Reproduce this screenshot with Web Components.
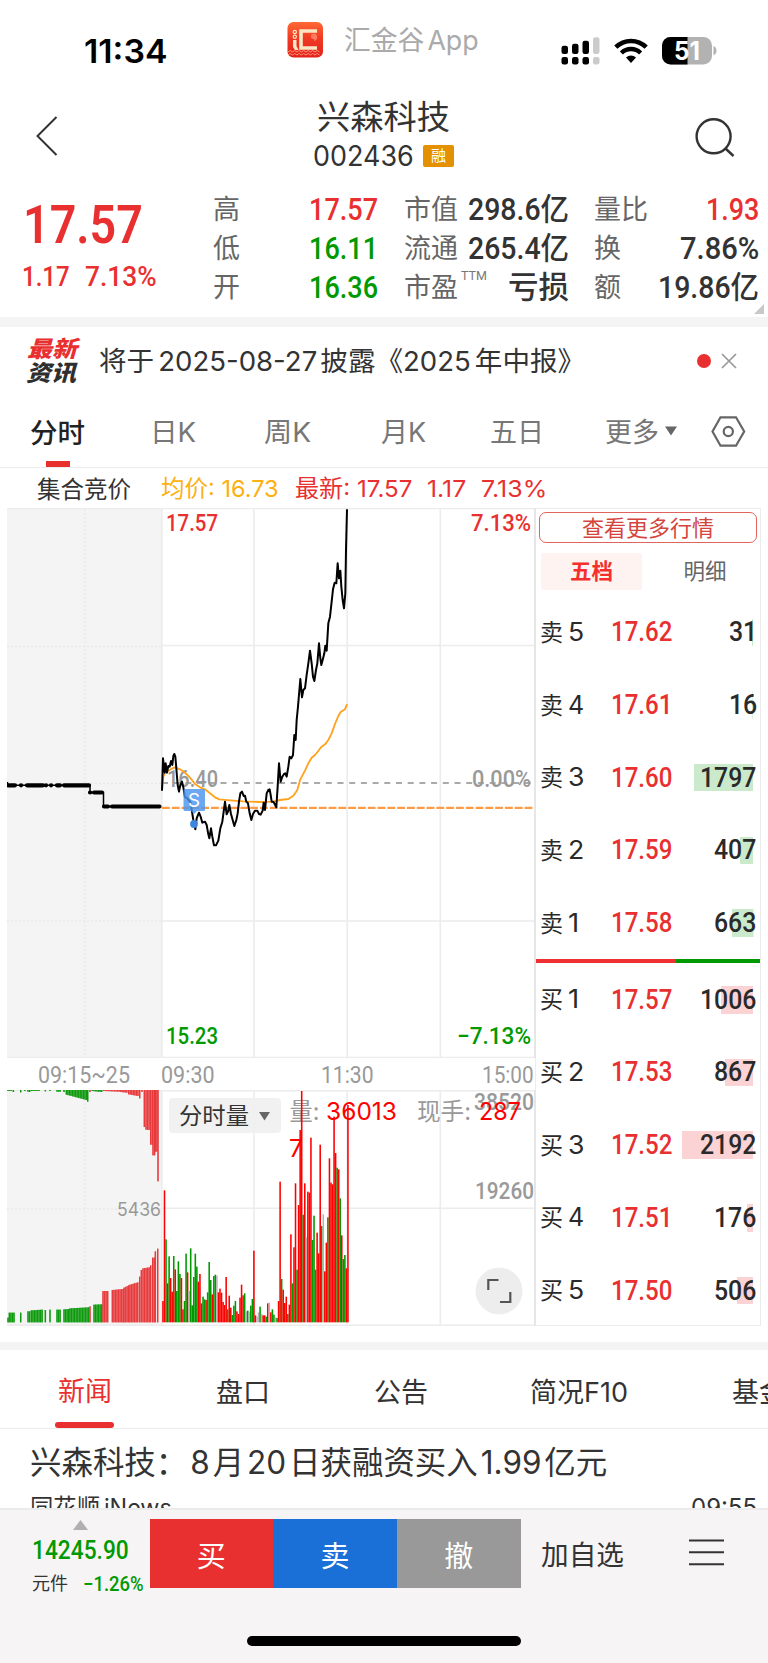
<!DOCTYPE html>
<html lang="zh-CN">
<head>
<meta charset="utf-8">
<title>兴森科技 002436</title>
<style>
  body {
    margin: 0;
    width: 768px;
    height: 1663px;
    overflow: hidden;
    background: #fff;
    color: #333;
    font-family: Inter, "Noto Sans CJK SC", sans-serif;
  }
</style>
</head>
<body>
<stock-app></stock-app>

<script>
// fit-text.js - one line of text squeezed or stretched to the width in "w"
class FitText extends HTMLElement {
  constructor() {
    super();
    this.shadowDOM = this.attachShadow({ mode: 'open' });
    this.shadowDOM.innerHTML = `
      <style>
        :host { display: inline-block; line-height: 1; white-space: nowrap; flex: none; }
        span { display: inline-block; transform-origin: 0 50%; }
      </style>
      <span><slot></slot></span>
    `;
  }

  connectedCallback() {
    const w = Number(this.getAttribute('w'));
    const span = this.shadowDOM.querySelector('span');
    const natural = span.offsetWidth;
    this.style.width = `${w}px`;
    if (natural) span.style.transform = `scaleX(${w / natural})`;
  }
}
customElements.define('fit-text', FitText);

// status-bar.js
class StatusBar extends HTMLElement {
  constructor() {
    super();
    this.shadowDOM = this.attachShadow({ mode: 'open' });
    this.shadowDOM.innerHTML = `
      <style>
        :host { display: flex; height: 86px; box-sizing: border-box; padding-left: 84px; align-items: flex-start; }
        .time { margin-top: 35px; font-size: 33px; font-weight: 600; color: #000; }
        .logo { margin: 22px 0 0 120px; }
        .app { margin: 27px 0 0 21px; font-size: 27px; color: #aaa; }
        .signal { margin: 36px 0 0 82px; }
        .wifi { margin: 38px 0 0 14px; }
        .battery { margin: 37px 0 0 14px; }
      </style>
      <fit-text class="time" w="83">11:34</fit-text>
      <svg class="logo" width="36" height="36" viewBox="0 0 36 36">
        <defs>
          <linearGradient id="g" x1="0" y1="0" x2="0" y2="1">
            <stop offset="0" stop-color="#ff6a35"/><stop offset=".45" stop-color="#f03a24"/><stop offset="1" stop-color="#e2211c"/>
          </linearGradient>
        </defs>
        <rect x=".5" width="35.5" height="35.5" rx="6" fill="url(#g)"/>
        <path d="M1 30q2-3 4.500 0q2-3 4.500 0q2-3 4.500 0q2-3 4.500 0q2-3 4.500 0q2-3 4.500 0q2-3 4.500 0M1 33q2-3 4.500 0q2-3 4.500 0q2-3 4.500 0q2-3 4.500 0q2-3 4.500 0q2-3 4.500 0q2-3 4.500 0" fill="none" stroke="#ff9d80" stroke-width=".9"/>
        <path d="M30 9H14V26H30" fill="none" stroke="#fbe6c3" stroke-width="3.600"/>
        <path d="M6 18h3.500v6l2 4H8l-2-3z" fill="#fbe6c3"/>
        <circle cx="7.800" cy="10" r="1.600" fill="none" stroke="#fbe6c3" stroke-width="1.200"/>
        <circle cx="7.800" cy="14.800" r="1.600" fill="none" stroke="#fbe6c3" stroke-width="1.200"/>
        <path d="M24 15a3 3 0 0 1 6-1q1 4-3 5v-2q-3 0-3-2z" fill="#ff7b5c"/>
      </svg>
      <fit-text class="app" w="135">汇金谷<span style="margin-left:3px">App</span></fit-text>
      <svg class="signal" width="39" height="30" viewBox="0 0 39 30">
        <rect x=".5" y="9.700" width="6.500" height="8.300" rx="2.200"/><rect x="11" y="7.700" width="6.500" height="10.300" rx="2.200"/>
        <rect x="21.500" y="4.700" width="6.500" height="13.300" rx="2.200"/><rect x="32" y="1.300" width="6.500" height="16.700" rx="2.200" fill="#cbcbcb"/>
        <rect x=".5" y="21" width="6.500" height="7.500" rx="2.200"/><rect x="11" y="21" width="6.500" height="7.500" rx="2.200"/>
        <rect x="21.500" y="21" width="6.500" height="7.500" rx="2.200"/><rect x="32" y="21" width="6.500" height="7.500" rx="2.200" fill="#cbcbcb"/>
      </svg>
      <svg class="wifi" width="34" height="26" viewBox="0 0 34 26" fill="none" stroke="#000">
        <path d="M1.800 9.200a21.500 21.500 0 0 1 30.400 0" stroke-width="4.500"/>
        <path d="M7.400 15a13.600 13.600 0 0 1 19.200 0" stroke-width="4.400"/>
        <path d="M17 25l-5-5.500a7.200 7.200 0 0 1 10 0z" fill="#000" stroke="none"/>
      </svg>
      <svg class="battery" width="56" height="29" viewBox="0 0 56 29">
        <defs><clipPath id="b"><rect width="50" height="27.500" rx="8.500"/></clipPath></defs>
        <g clip-path="url(#b)"><rect width="50" height="28" fill="#b2b2b2"/><rect width="25.500" height="28" fill="#000"/></g>
        <path d="M51.500 9q3 1.500 3 4.700t-3 4.700z" fill="#b2b2b2"/>
        <text x="12" y="22.800" font-size="25" font-weight="700" fill="#fff" textLength="26" lengthAdjust="spacingAndGlyphs">51</text>
      </svg>
    `;
  }
}
customElements.define('status-bar', StatusBar);

// stock-header.js
class StockHeader extends HTMLElement {
  constructor() {
    super();
    this.shadowDOM = this.attachShadow({ mode: 'open' });
    this.shadowDOM.innerHTML = `
      <style>
        :host { display: grid; grid-template-columns: 36px 1fr 36px; height: 104px; box-sizing: border-box; padding: 0 36px 0 34px; }
        .back { margin-top: 29px; }
        .search { margin: 30px 0 0 -1px; }
        .title { display: flex; flex-direction: column; align-items: center; padding-top: 15px; }
        .name { font-size: 33px; }
        .code { display: flex; align-items: center; gap: 9px; margin-top: 8px; font-size: 28px; height: 28px; margin-left: 1px; }
        .tag { width: 31px; height: 22px; border-radius: 2px; background: #e39100; color: #fff; font-size: 15px; line-height: 22px; text-align: center; }
      </style>
      <svg class="back" width="26" height="42" viewBox="0 0 26 42" fill="none" stroke="#333" stroke-width="2"><path d="M22.500 2L3.500 21l19 19"/></svg>
      <div class="title">
        <fit-text class="name" w="133">兴森科技</fit-text>
        <div class="code"><fit-text w="101">002436</fit-text><div class="tag">融</div></div>
      </div>
      <svg class="search" width="42" height="42" viewBox="0 0 42 42" fill="none" stroke="#333" stroke-width="2.400"><circle cx="18.600" cy="20.300" r="17"/><path d="M30.500 32.500l8 7.500"/></svg>
    `;
  }
}
customElements.define('stock-header', StockHeader);

// quote-panel.js
class QuotePanel extends HTMLElement {
  constructor() {
    super();
    this.shadowDOM = this.attachShadow({ mode: 'open' });
    this.shadowDOM.innerHTML = `
      <style>
        :host { display: flex; height: 127px; position: relative; font-family: Roboto, "Noto Sans CJK SC", sans-serif; border-bottom: 10px solid #f4f4f4; }
        .last { width: 213px; box-sizing: border-box; padding: 8px 0 0 23px; color: #e93030; }
        .last .price { font-size: 54px; font-weight: 600; display: block; }
        .change { display: flex; gap: 15px; margin: 11px 0 0 -1px; font-size: 28.500px; font-weight: 500; }
        .cell { display: flex; justify-content: space-between; height: 39.300px; align-items: center; font-size: 31px; font-weight: 500; }
        .cell > :last-child { margin-top: -1px; }
        .cell .k { font-size: 27px; font-weight: 400; color: #666; padding-top: 1px; }
        .c1 { width: 165px; margin-right: 26px; }
        .c2 { width: 165px; margin-right: 25px; }
        .c3 { width: 165px; }
        .red { color: #e93030; } .green { color: #009900; }
        sup { font-size: 13px; line-height: 1; align-self: flex-start; margin: 0 auto 0 3px; font-weight: 400; color: #777; }
        .more { position: absolute; right: 4px; bottom: 3px; }
      </style>
      <div class="last">
        <fit-text class="price" w="120">17.57</fit-text>
        <div class="change"><fit-text w="48">1.17</fit-text><fit-text w="72">7.13%</fit-text></div>
      </div>
      <div class="c1">
        <div class="cell"><fit-text class="k" w="27">高</fit-text><fit-text class="red" w="69">17.57</fit-text></div>
        <div class="cell"><fit-text class="k" w="27">低</fit-text><fit-text class="green" w="69">16.11</fit-text></div>
        <div class="cell"><fit-text class="k" w="27">开</fit-text><fit-text class="green" w="69">16.36</fit-text></div>
      </div>
      <div class="c2">
        <div class="cell"><fit-text class="k" w="54">市值</fit-text><fit-text w="101">298.6亿</fit-text></div>
        <div class="cell"><fit-text class="k" w="54">流通</fit-text><fit-text w="101">265.4亿</fit-text></div>
        <div class="cell"><fit-text class="k" w="54">市盈</fit-text><sup><fit-text w="26">TTM</fit-text></sup><fit-text w="61">亏损</fit-text></div>
      </div>
      <div class="c3">
        <div class="cell"><fit-text class="k" w="54">量比</fit-text><fit-text class="red" w="53">1.93</fit-text></div>
        <div class="cell"><fit-text class="k" w="27">换</fit-text><fit-text w="79">7.86%</fit-text></div>
        <div class="cell"><fit-text class="k" w="27">额</fit-text><fit-text w="101">19.86亿</fit-text></div>
      </div>
      <svg class="more" width="10" height="10"><path d="M10 0v10H0z" fill="#c8c8c8"/></svg>
    `;
  }
}
customElements.define('quote-panel', QuotePanel);

// news-strip.js
class NewsStrip extends HTMLElement {
  constructor() {
    super();
    this.shadowDOM = this.attachShadow({ mode: 'open' });
    this.shadowDOM.innerHTML = `
      <style>
        :host { display: flex; align-items: center; height: 68px; box-sizing: border-box; padding-left: 26px; }
        .badge { display: flex; flex-direction: column; gap: 1px; width: 51px; font-size: 22.500px; font-weight: 900; font-style: italic; color: #2e2e2e; }
        .badge :first-child { color: #e93030; margin-left: 1px; }
        .text { margin-left: 22px; font-size: 27px; }
        .text span { margin: 0 3px 0 4px; }
        .dot { width: 14px; height: 14px; border-radius: 50%; background: #e93030; margin: 0 10px 0 109px; }
      </style>
      <div class="badge"><fit-text w="50">最新</fit-text><fit-text w="50">资讯</fit-text></div>
      <fit-text class="text" w="489">将于<span>2025-08-27</span>披露《2025<span>年中报》</span></fit-text>
      <div class="dot"></div>
      <svg width="16" height="16" viewBox="0 0 16 16" stroke="#999" stroke-width="1.700"><path d="M1 1l14 14M15 1L1 15"/></svg>
    `;
  }
}
customElements.define('news-strip', NewsStrip);

// period-tabs.js
class PeriodTabs extends HTMLElement {
  constructor() {
    super();
    this.shadowDOM = this.attachShadow({ mode: 'open' });
    this.shadowDOM.innerHTML = `
      <style>
        :host { display: grid; grid-template-columns: 120px 114px 117px 109px 115px 106px 1fr; align-items: center; height: 73px; box-sizing: border-box; padding-left: 30px; border-bottom: 1.500px solid #ececec; font-size: 27px; color: #777; }
        fit-text { padding-top: 2px; }
        .on { color: #222; font-weight: 500; align-self: stretch; display: flex; flex-direction: column; justify-content: space-between; padding-top: 23px; }
        .on::after { content: ""; width: 24px; height: 6px; margin-left: 16px; background: #e93030; }
        .more { display: flex; align-items: center; gap: 6px; }
      </style>
      <div class="on"><fit-text w="55">分时</fit-text></div>
      <fit-text w="46">日K</fit-text>
      <fit-text w="47">周K</fit-text>
      <fit-text w="45">月K</fit-text>
      <fit-text w="54">五日</fit-text>
      <div class="more"><fit-text w="54">更多</fit-text><svg width="12" height="10"><path d="M0 .5h12L6 9.500z" fill="#666"/></svg></div>
      <svg width="35" height="31" viewBox="0 0 35 31" fill="none" stroke="#666" stroke-width="2.200"><path d="M9.500 1.300h15.500L33.200 15.500 25 29.700H9.500L1.500 15.500z"/><circle cx="17.300" cy="15.500" r="4.600"/></svg>
    `;
  }
}
customElements.define('period-tabs', PeriodTabs);

// chart-legend.js
class ChartLegend extends HTMLElement {
  constructor() {
    super();
    this.shadowDOM = this.attachShadow({ mode: 'open' });
    this.shadowDOM.innerHTML = `
      <style>
        :host { display: flex; align-items: center; height: 40px; padding: 2px 0 0 37px; box-sizing: border-box; font-size: 23.500px; color: #e93030; }
        .auction { color: #333; padding-top: 1px; }
        .avg { color: #fdb00f; margin: 0 16px 0 30px; }
        .now { margin-right: 15px; }
        .diff { margin-right: 15px; }
      </style>
      <fit-text class="auction" w="94">集合竞价</fit-text>
      <fit-text class="avg" w="118">均价: 16.73</fit-text>
      <fit-text class="now" w="117">最新: 17.57</fit-text>
      <fit-text class="diff" w="39">1.17</fit-text>
      <fit-text w="66">7.13%</fit-text>
    `;
  }
}
customElements.define('chart-legend', ChartLegend);

// price-chart.js - plots are kept on a grid three times finer than the page
class PriceChart extends HTMLElement {
  constructor() {
    super();
    this.shadowDOM = this.attachShadow({ mode: 'open' });
    this.render();
  }

  render() {
    const price = '486,872 489,775 492,800 494,818 497,790 501,818 505,798 509,800 513,783 517,795 520,768 523,762 526,770 529,805 533,855 537,875 541,855 546,845 550,862 555,892 560,893 566,900 571,906 576,935 580,960 586,988 590,955 597,938 602,950 607,968 615,965 620,975 625,1003 628,1015 633,985 637,1010 642,1036 648,1036 655,1022 661,985 667,965 671,935 675,905 680,943 684,935 688,915 693,942 698,960 703,978 709,960 713,940 717,905 721,880 726,875 731,888 735,887 739,905 744,910 749,940 754,960 759,942 765,932 772,932 777,942 782,944 788,932 791,908 795,930 800,880 805,870 809,868 812,885 815,905 820,905 824,912 829,922 833,860 837,790 842,845 847,830 852,822 856,820 860,830 865,800 869,770 874,775 879,765 883,705 887,720 890,660 894,620 901,537 906,592 910,570 915,565 920,525 925,490 930,452 935,490 939,530 943,543 948,510 952,490 957,430 961,475 964,495 968,480 973,460 976,437 980,452 985,370 990,350 995,305 999,268 1004,248 1009,250 1013,190 1017,235 1021,212 1024,260 1028,300 1032,325 1036,280 1038,150 1041,28';
    const average = '486,870 490,830 497,815 505,812 515,806 525,802 540,808 553,816 570,833 585,852 600,862 615,868 630,880 645,892 658,898 690,901 730,904 780,906 820,905 840,900 865,897 880,887 892,870 901,838 915,812 925,790 935,773 945,765 955,753 963,742 975,733 985,720 995,700 1005,672 1015,648 1022,636 1035,628 1041,612';
    this.shadowDOM.innerHTML = `
      <style>
        :host { display: block; height: 550px; }
        svg { display: block; }
        text { font: 500 24px Roboto, sans-serif; }
      </style>
      <svg width="529" height="550" viewBox="7 508 529 550">
        <rect x="7" y="508" width="154.500" height="550" fill="#f4f4f4"/>
        <path d="M85 509v549M7 646.500h154M7 783.500h154M7 921h154" stroke="#e9e9e9" stroke-width="1.500" stroke-dasharray="2 2"/>
        <path d="M7 508.500h529M162 645.500h373M162 921h373M7 1057.500h529M161.800 508v550M254 508v550M347.200 508v550M440.300 508v550" stroke="#ececec" stroke-width="1.600" fill="none"/>
        <path d="M535 508v550" stroke="#e6e6e6" stroke-width="2"/>
        <path d="M162 783h371" stroke="#aaa" stroke-width="2" stroke-dasharray="6 5.700"/>
        <g fill="#999">
          <text x="167" y="787" textLength="51" lengthAdjust="spacingAndGlyphs">16.40</text>
          <text x="472" y="787" textLength="59" lengthAdjust="spacingAndGlyphs">0.00%</text>
        </g>
        <path d="M162 807.800h371" stroke="#ff9a45" stroke-width="2.200" stroke-dasharray="7.800 2"/>
        <path d="M7.500 782v3.300H90V792.500h13.500v14H160" fill="none" stroke="#000" stroke-width="1.500"/>
        <path d="M8 785.300h7M21 785.300h.1M27 785.300h16M46 785.300h.1M51 785.300h.1M57 785.300h3M64 785.300h25M90 792.500h.1M94 792.500h8M104 806.500h4M112 806.500h47.500" fill="none" stroke="#000" stroke-width="4.200" stroke-linecap="round"/>
        <g transform="translate(0 500) scale(.33333)" fill="none" stroke-linejoin="round">
          <polyline points="${average}" stroke="#ffa21f" stroke-width="5.500"/>
          <polyline points="${price}" stroke="#000" stroke-width="6"/>
        </g>
        <rect x="183.500" y="789" width="21.500" height="22" rx="1.500" fill="#4a95ee" fill-opacity=".82"/>
        <path d="M191 811h6l-3 3z" fill="#4a95ee" fill-opacity=".82"/>
        <circle cx="194" cy="824" r="3.900" fill="#3f86df"/>
        <text x="188" y="806.500" fill="#fff" style="font:19px Inter,sans-serif" textLength="12" lengthAdjust="spacingAndGlyphs">S</text>
        <g fill="#e93030">
          <text x="166" y="531" textLength="52" lengthAdjust="spacingAndGlyphs">17.57</text>
          <text x="471" y="531" textLength="60" lengthAdjust="spacingAndGlyphs">7.13%</text>
        </g>
        <g fill="#009900">
          <text x="166" y="1044" textLength="52" lengthAdjust="spacingAndGlyphs">15.23</text>
          <text x="457" y="1044" textLength="74" lengthAdjust="spacingAndGlyphs">−7.13%</text>
        </g>
      </svg>
    `;
  }
}
customElements.define('price-chart', PriceChart);

// volume-chart.js
class VolumeChart extends HTMLElement {
  constructor() {
    super();
    this.shadowDOM = this.attachShadow({ mode: 'open' });
    this.render();
  }

  // top of each minute bar, then its colour: r up, g down, n flat
  minuteBars() {
    const bars = '783r 451r 598g 730r 649g 714r 755r 648g 688r 753g 664g 702g 714r 808r 783g 641g 697r 753n 625g 796g 711g 641g 680g 725r 702r 790r 770g 778g 780r 757g 666g 720g 763r 708g 704g 707n 757r 746r 758r 786r 795r 711r 808g 767r 803r 825g 797g 783g 814r 822r 773r 734r 766r 760g 814n 812g 815n 797g 777g 632r 826r 830n 817n 800g 822n 826r 826r 830g 790r 788n 817r 808g 824g 832n 834g 783r 425r 717g 749r 789r 770r 822g 794r 583r 730g 622r 430r 689g 495r 270r 153r 524g 430r 592n 455r 458r 293r 600g 527g 689g 578r 640r 314r 558g 523n 694r 608r 532g 355r 428r 433r 230r 339r 383g 388r 475g 586r 657g 645g 685r 195r'.split(' ');
    const fill = { r: '#ff0000', g: '#009900', n: '#b5b5b5' };
    const step = 555 / (bars.length - 1);
    return bars.map((bar, i) => {
      const top = parseInt(bar, 10);
      return `<rect x="${486.5 + i * step}" y="${top}" width="4.700" height="${847 - top}" fill="${fill[bar.slice(-1)]}"/>`;
    }).join('');
  }

  // call auction: [from, to, start y, end y, colour], drawn as a run of thin bars
  auctionBars(runs, base) {
    return runs.map(([from, to, y1, y2, fill]) => {
      const count = Math.max(1, Math.round((to - from) / 4.65));
      let out = '';
      for (let i = 0; i < count; i++) {
        const y = y1 + (y2 - y1) * (count > 1 ? i / (count - 1) : 0);
        out += `<rect x="${from + i * 4.65}" y="${Math.min(y, base)}" width="3.900" height="${Math.abs(base - y)}" fill="${fill}"/>`;
        out += `<rect x="${from + i * 4.65}" y="${Math.min(y, base)}" width="4.650" height="${Math.abs(base - y)}" fill="${fill}" opacity=".5"/>`;
      }
      return out;
    }).join('');
  }

  render() {
    const g = '#0c9a0c';
    const r = '#e8393b';
    const matched = [
      [22, 26, 833, 833, g], [26, 45, 818, 818, g], [60, 65, 818, 818, g], [82, 92, 814, 814, g], [92, 127, 811, 809, g],
      [134, 139, 810, 810, g], [148, 153, 809, 809, g], [169, 183, 809, 809, g], [190, 208, 808, 807, g], [208, 267, 805, 802, g],
      [268, 272, 799, 799, r], [280, 307, 794, 793, g], [307, 326, 753, 753, r], [335, 370, 750, 747, r], [370, 388, 743, 736, r],
      [388, 416, 734, 727, r], [417, 421, 710, 710, r], [422, 426, 690, 690, r], [427, 450, 685, 682, r], [450, 455, 676, 676, r],
      [456, 464, 653, 653, r], [464, 470, 634, 634, r], [471, 476, 626, 626, r]
    ];
    const unmatched = [
      [22, 36, 153, 153, g], [38, 43, 156, 156, g], [60, 64, 157, 157, g], [73, 78, 153, 153, g], [82, 92, 155, 156, g], [92, 120, 153, 153, g],
      [134, 139, 154, 154, g], [148, 153, 153, 153, g], [169, 183, 155, 155, g], [190, 195, 156, 156, g], [197, 262, 164, 180, g], [261, 265, 185, 185, g],
      [268, 272, 156, 156, r], [275, 307, 153, 156, g], [309, 360, 153, 155, r], [360, 384, 156, 158, r], [384, 416, 163, 168, r],
      [417, 421, 175, 175, r], [424, 428, 156, 156, r], [431, 435, 261, 261, r], [436, 450, 269, 270, r], [450, 457, 314, 314, r],
      [457, 464, 346, 346, r], [464, 471, 335, 335, r], [472, 476, 424, 424, r]
    ];
    this.shadowDOM.innerHTML = `
      <style>
        :host { display: block; position: relative; height: 236px; }
        svg { display: block; }
        text { font: 400 24px Inter, "Noto Sans CJK SC", sans-serif; }
        .num { font: 500 24px Roboto, sans-serif; }
        .picker { position: absolute; left: 162px; top: 8px; width: 112px; height: 35px; box-sizing: border-box; padding: 1px 11px 0 10px; border-radius: 4px; background: rgba(240, 240, 240, .93); display: flex; align-items: center; justify-content: space-between; font-size: 23px; }
        .expand { position: absolute; left: 468px; top: 177px; }
      </style>
      <svg width="529" height="236" viewBox="7 1090 529 236">
        <rect x="7" y="1090" width="154.500" height="235" fill="#f4f4f4"/>
        <path d="M85 1091v234M7 1209h154" stroke="#e9e9e9" stroke-width="1.500" stroke-dasharray="2 2"/>
        <path d="M7 1090.800h529M162 1208.300h373M7 1325.300h529M161.800 1090v236M254 1090v236M347.200 1090v236M440.300 1090v236" stroke="#ececec" stroke-width="1.600" fill="none"/>
        <path d="M535 1090v236" stroke="#e6e6e6" stroke-width="2"/>
        <g transform="translate(0 1040) scale(.33333)">
          ${this.auctionBars(matched, 847)}
          ${this.auctionBars(unmatched, 150)}
        </g>
        <g fill="#999">
          <text x="117" y="1215.500" style="font-size:19px" textLength="44" lengthAdjust="spacingAndGlyphs">5436</text>
          <text class="num" x="474" y="1110" textLength="60" lengthAdjust="spacingAndGlyphs">38520</text>
          <text class="num" x="475" y="1198.500" textLength="59" lengthAdjust="spacingAndGlyphs">19260</text>
          <text x="289.500" y="1120" textLength="30" lengthAdjust="spacingAndGlyphs">量:</text>
          <text x="417" y="1120" textLength="54" lengthAdjust="spacingAndGlyphs">现手:</text>
        </g>
        <g transform="translate(0 1040) scale(.33333)">${this.minuteBars()}</g>
        <g fill="#ff0000">
          <text x="326" y="1120" textLength="71" lengthAdjust="spacingAndGlyphs">36013</text>
          <text x="289" y="1157" textLength="14" lengthAdjust="spacingAndGlyphs">7</text>
          <text x="479" y="1120" textLength="42" lengthAdjust="spacingAndGlyphs">287</text>
        </g>
      </svg>
      <div class="picker"><fit-text w="70">分时量</fit-text><svg width="11" height="9"><path d="M0 0h11L5.500 8.500z" fill="#666"/></svg></div>
      <svg class="expand" width="48" height="48" viewBox="0 0 48 48"><circle cx="24" cy="24" r="23.500" fill="#ededed"/><path d="M13.300 23V13h10.200M35.300 25v10H25" fill="none" stroke="#555" stroke-width="2.200"/></svg>
    `;
  }
}
customElements.define('volume-chart', VolumeChart);

// order-row.js
class OrderRow extends HTMLElement {
  constructor() {
    super();
    this.shadowDOM = this.attachShadow({ mode: 'open' });
  }

  set order(order) {
    this._order = order;
    this.render();
  }

  render() {
    const { side, level, price, volume, bar } = this._order;
    this.shadowDOM.innerHTML = `
      <style>
        :host { display: grid; grid-template-columns: 28px 43px 60px 1fr; align-items: center; height: 72.700px; padding: 0 3px 0 4px; color: #2a2a2a; }
        .side { font-size: 24px; padding-top: 1px; }
        .level { font-size: 25px; }
        .price, .volume { font: 500 28px Roboto, sans-serif; line-height: 1; }
        .price { color: #e93030; }
        .volume { justify-self: stretch; display: flex; align-items: center; justify-content: flex-end; height: 27.500px; background: linear-gradient(${side === '卖' ? '#cbeacb' : '#fbd3d4'} 0 0) no-repeat right 4px top 0 / ${bar}px 100%; }
      </style>
      <fit-text class="side" w="23">${side}</fit-text>
      <fit-text class="level" w="${level === 1 ? 11 : 16}">${level}</fit-text>
      <fit-text class="price" w="61">${price}</fit-text>
      <div class="volume"><fit-text w="${String(volume).length * 14.2}">${volume}</fit-text></div>
    `;
  }
}
customElements.define('order-row', OrderRow);

// order-book.js
class OrderBook extends HTMLElement {
  constructor() {
    super();
    this.shadowDOM = this.attachShadow({ mode: 'open' });
    this.render();
  }

  render() {
    const orders = [
      ['卖', 5, '17.62', 31, 1], ['卖', 4, '17.61', 16, 0.6], ['卖', 3, '17.60', 1797, 59], ['卖', 2, '17.59', 407, 13], ['卖', 1, '17.58', 663, 21.5],
      ['买', 1, '17.57', 1006, 32], ['买', 2, '17.53', 867, 28], ['买', 3, '17.52', 2192, 71], ['买', 4, '17.51', 176, 6], ['买', 5, '17.50', 506, 16]
    ];
    this.shadowDOM.innerHTML = `
      <style>
        :host { display: block; width: 225px; box-sizing: border-box; border: solid #ececec; border-width: 1.500px 1.500px 1.500px 0; height: 818px; }
        .more { height: 31px; box-sizing: border-box; margin: 3px 3px 0 3px; border: 1.300px solid #e0635d; border-radius: 7px; display: flex; align-items: center; justify-content: center; color: #d4453e; font-size: 22px; }
        .tabs { display: grid; grid-template-columns: 101px 1fr; height: 37px; margin: 10px -8px 6px 5px; font-size: 21.500px; align-items: center; justify-items: center; color: #666; }
        .on { display: flex; align-items: center; justify-content: center; width: 101px; height: 37px; border-radius: 3px; background: #fff3f2; color: #f5302c; font-weight: 700; }
        .ratio { height: 4px; background: linear-gradient(90deg, #ee3033 0 62.300%, #009900 62.300%); }
      </style>
      <div class="more"><fit-text w="132">查看更多行情</fit-text></div>
      <div class="tabs"><div class="on"><fit-text w="43">五档</fit-text></div><fit-text w="43">明细</fit-text></div>
      ${orders.map((order, i) => `${i === 5 ? '<div class="ratio"></div>' : ''}<order-row></order-row>`).join('')}
    `;
    const rows = this.shadowDOM.querySelectorAll('order-row');
    rows.forEach((row, index) => {
      const [side, level, price, volume, bar] = orders[index];
      row.order = { side, level, price, volume, bar };
    });
  }
}
customElements.define('order-book', OrderBook);

// trade-board.js
class TradeBoard extends HTMLElement {
  constructor() {
    super();
    this.shadowDOM = this.attachShadow({ mode: 'open' });
    this.shadowDOM.innerHTML = `
      <style>
        :host { display: flex; padding: 0 0 16px 7px; border-bottom: 8px solid #f4f4f4; }
        .charts { width: 529px; }
        .axis { display: flex; align-items: center; height: 32px; box-sizing: border-box; padding: 3px 0 0 31px; border-right: 1px solid #eee; font: 23.500px Roboto, sans-serif; color: #999; }
        .axis :nth-child(2) { margin: 0 106px 0 31px; }
        .axis :nth-child(4) { margin-left: 108px; }
      </style>
      <div class="charts">
        <price-chart></price-chart>
        <div class="axis"><fit-text w="92">09:15~25</fit-text><fit-text w="54">09:30</fit-text><fit-text w="53">11:30</fit-text><fit-text w="52">15:00</fit-text></div>
        <volume-chart></volume-chart>
      </div>
      <order-book></order-book>
    `;
  }
}
customElements.define('trade-board', TradeBoard);

// news-feed.js
class NewsFeed extends HTMLElement {
  constructor() {
    super();
    this.shadowDOM = this.attachShadow({ mode: 'open' });
    this.shadowDOM.innerHTML = `
      <style>
        :host { display: block; height: 158px; overflow: hidden; }
        .tabs { display: grid; grid-template-columns: 158px 158px 156px 202px 1fr; align-items: center; height: 79px; box-sizing: border-box; padding: 6px 0 0 58px; border-bottom: 1.500px solid #ececec; font-size: 27px; }
        .on { color: #e93030; align-self: stretch; display: flex; flex-direction: column; justify-content: space-between; padding-top: 22px; }
        .on::after { content: ""; width: 59px; height: 6px; margin-left: -3px; border-radius: 3px; background: #e93030; }
        .title { display: block; margin: 18px 0 0 30px; font-size: 32px; }
        .title span { margin: 0 3px; }
        .meta { display: flex; justify-content: space-between; margin: 17px 11px 0 30px; font-size: 24px; }
      </style>
      <div class="tabs">
        <div class="on"><fit-text w="54">新闻</fit-text></div>
        <fit-text w="54">盘口</fit-text>
        <fit-text w="54">公告</fit-text>
        <fit-text w="98">简况F10</fit-text>
        <fit-text w="54">基金</fit-text>
      </div>
      <fit-text class="title" w="577">兴森科技：<span>8</span>月<span>20</span>日获融资买入<span>1.99</span>亿元</fit-text>
      <div class="meta"><fit-text w="142">同花顺<span style="margin-left:4px">iNews</span></fit-text><fit-text w="66">09:55</fit-text></div>
    `;
  }
}
customElements.define('news-feed', NewsFeed);

// action-bar.js
class ActionBar extends HTMLElement {
  constructor() {
    super();
    this.shadowDOM = this.attachShadow({ mode: 'open' });
    this.shadowDOM.innerHTML = `
      <style>
        :host { display: block; height: 155px; box-sizing: border-box; background: #f6f4f5; border-top: 2px solid #ebebeb; }
        .row { display: flex; height: 80px; }
        .index { width: 149.500px; box-sizing: border-box; padding: 10px 0 0 32px; font: 500 26px Roboto, "Noto Sans CJK SC", sans-serif; color: #009900; }
        .index svg { display: block; margin-left: 41px; }
        .index .value { display: block; margin-top: 7px; }
        .sector { display: flex; align-items: center; gap: 15px; margin-top: 11px; font-size: 20px; }
        .sector .name { font-size: 18px; font-weight: 400; color: #333; }
        .buttons { display: grid; grid-template-columns: 123.500px 124px 123.500px; height: 69px; margin-top: 9px; color: #fff; font-size: 29px; }
        .buttons div { display: flex; align-items: center; justify-content: center; }
        .buy { background: #e93030; } .sell { background: #1b70d8; } .cancel { background: #999; }
        .add { margin: 32px 65px 0 20px; font-size: 27px; }
        .menu { margin-top: 29px; }
        .home { width: 274px; height: 10px; margin: 46px auto 0 247px; border-radius: 5px; background: #000; }
      </style>
      <div class="row">
        <div class="index">
          <svg width="15" height="10"><path d="M7.500 0L15 10H0z" fill="#b0b0b0"/></svg>
          <fit-text class="value" w="97">14245.90</fit-text>
          <div class="sector"><fit-text class="name" w="36">元件</fit-text><fit-text w="61">−1.26%</fit-text></div>
        </div>
        <div class="buttons">
          <div class="buy">买</div>
          <div class="sell">卖</div>
          <div class="cancel">撤</div>
        </div>
        <fit-text class="add" w="83">加自选</fit-text>
        <svg class="menu" width="35" height="27" stroke="#333" stroke-width="2"><path d="M0 1.500h35M0 13.300h35M0 25.300h35"/></svg>
      </div>
      <div class="home"></div>
    `;
  }
}
customElements.define('action-bar', ActionBar);

// stock-app.js
class StockApp extends HTMLElement {
  constructor() {
    super();
    this.shadowDOM = this.attachShadow({ mode: 'open' });
    this.shadowDOM.innerHTML = `
      <style>
        :host { display: flex; flex-direction: column; width: 768px; height: 1663px; }
        :host > * { flex: none; }
      </style>
      <status-bar></status-bar>
      <stock-header></stock-header>
      <quote-panel></quote-panel>
      <news-strip></news-strip>
      <period-tabs></period-tabs>
      <chart-legend></chart-legend>
      <trade-board></trade-board>
      <news-feed></news-feed>
      <action-bar></action-bar>
    `;
  }
}
customElements.define('stock-app', StockApp);
</script>
</body>
</html>
